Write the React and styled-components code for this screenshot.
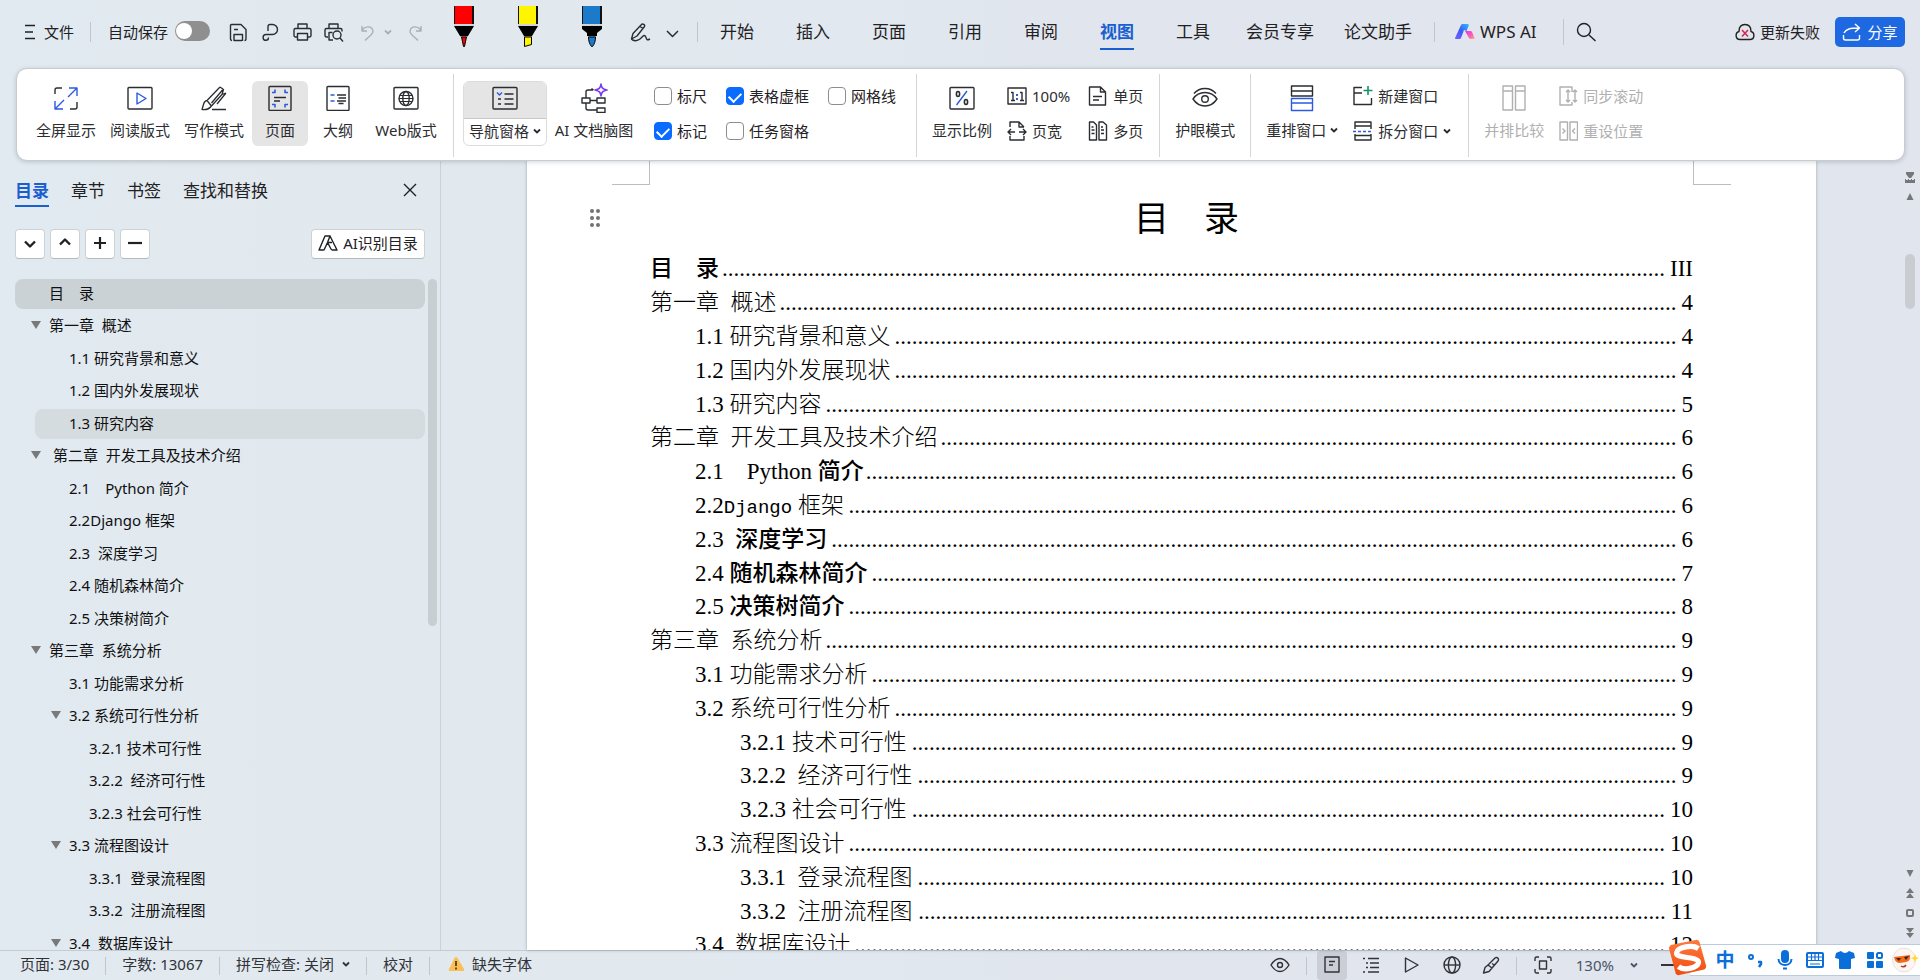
import React, { useLayoutEffect, useRef, useState } from "react";
import styled, { createGlobalStyle, css } from "styled-components";

const INK = "#2b2d30";
const BLUE = "#2a5be0";
const LINK = "#1a5fd0";

const GlobalStyle = createGlobalStyle`
  * { box-sizing: border-box; }
  body {
    margin: 0;
    color: #1f2124;
    font: 15px/20px "Noto Sans", "Noto Sans CJK SC", sans-serif;
  }
  button {
    padding: 0;
    border: 0;
    background: none;
    color: inherit;
    font: inherit;
    white-space: nowrap;
  }
  svg { display: block; flex: none; }
`;

/* ---------- Shell ---------- */

const Shell = styled.div`
  display: flex;
  flex-direction: column;
  height: 100vh;
  overflow: hidden;
  background: linear-gradient(90deg, #e2eaf1 0%, #e1e9ee 24%, #e1e8ef 42%, #e1e5ed 62%, #e1e5ed 100%);
`;

const Divider = styled.span`
  flex: none;
  width: 1px;
  height: ${(p) => p.$h || 20}px;
  background: #bfc6cc;
`;

/* ---------- Title bar ---------- */

const TitleBar = styled.header`
  display: flex;
  align-items: center;
  flex: none;
  height: 68px;
  padding: 0 15px 4px 24px;
`;

const FileButton = styled.button`
  display: flex;
  align-items: center;
  gap: 8px;
  margin-right: 16px;
`;

const AutoSave = styled.label`
  display: flex;
  align-items: center;
  gap: 7px;
  margin: 0 12px 0 17px;
  white-space: nowrap;
`;

const Toggle = styled.input`
  appearance: none;
  display: flex;
  align-items: center;
  width: 35px;
  height: 20px;
  margin: 0 0 2px;
  padding: 0 1px;
  border-radius: 10px;
  background: #8f8f8f;
  &::before {
    content: "";
    width: 16px;
    height: 16px;
    border-radius: 50%;
    background: #fff;
  }
`;

const ToolButton = styled.button`
  display: flex;
  align-items: center;
  justify-content: ${(p) => (p.$start ? "flex-start" : "center")};
  flex: none;
  width: ${(p) => p.$w || 32}px;
  height: 32px;
  color: ${(p) => (p.$dim ? "#a9b0b5" : INK)};
`;

const Pens = styled.div`
  display: flex;
  align-self: flex-start;
  padding-top: 6px;
`;

const PenButton = styled.button`
  display: flex;
  justify-content: center;
  width: 64px;
`;

const Tabs = styled.nav`
  display: flex;
  margin: 0 7px 0 1px;
`;

const Tab = styled.button`
  display: flex;
  justify-content: center;
  width: ${(p) => (p.$wide ? 98 : 76)}px;
  font-size: 17px;
  line-height: 26px;
  span {
    padding: 5px 0 3px;
    border-bottom: 2px solid transparent;
  }
  ${(p) =>
    p.$active &&
    css`
      color: ${LINK};
      font-weight: 700;
      span { border-color: ${LINK}; }
    `}
`;

const WpsAi = styled.button`
  display: flex;
  align-items: center;
  gap: 5px;
  margin: 0 26px 0 20px;
  font-size: 17px;
`;

const SearchButton = styled.button`
  margin-left: 12px;
`;

const Spacer = styled.div`
  flex: ${(p) => (p.$w ? `0 0 ${p.$w}px` : 1)};
`;

const SyncState = styled.button`
  display: flex;
  align-items: center;
  gap: 5px;
  margin-right: 15px;
`;

const ShareButton = styled.button`
  display: flex;
  align-items: center;
  justify-content: center;
  gap: 6px;
  width: 70px;
  height: 30px;
  border-radius: 5px;
  background: #1e69e2;
  color: #fff;
`;

/* ---------- Ribbon ---------- */

const Ribbon = styled.section`
  display: flex;
  flex: none;
  position: relative;
  z-index: 1;
  margin: 0 15px 0 16px;
  padding: 5px 0 3px;
  border: 1px solid #c6ccd0;
  border-radius: 11px;
  background: #fff;
  box-shadow: 0 1px 4px rgba(60, 80, 90, 0.25);
`;

const Group = styled.div`
  display: flex;
  align-items: center;
  gap: ${(p) => p.$gap || 0}px;
  height: 83px;
  padding: 0 ${(p) => p.$end || 9}px 4px ${(p) => p.$start || 9}px;
  border-right: 1px solid #d3d5d7;
  &:last-child { border-right: 0; }
`;

const BigButton = styled.button`
  display: flex;
  flex-direction: column;
  align-items: center;
  width: ${(p) => p.$w || 72}px;
  height: 65px;
  border-radius: 6px;
  background: ${(p) => (p.$active ? "#e5e5e5" : "none")};
  color: ${(p) => (p.disabled ? "#b0b0b0" : INK)};
`;

const BigIcon = styled.span`
  display: flex;
  align-items: center;
  justify-content: center;
  width: 100%;
  height: 34px;
`;

const Label = styled.span`
  display: flex;
  align-items: center;
  gap: 4px;
  height: 30px;
`;

const SplitButton = styled(BigButton)`
  border: 1px solid #dcdcdc;
  overflow: hidden;
  ${BigIcon} {
    height: 37px;
    padding-bottom: 4px;
    border-bottom: 1px solid #c8c8c8;
    background: #e5e5e5;
  }
  ${Label} { height: 23px; }
`;

const CheckGrid = styled.div`
  display: grid;
  grid-template: 35px 35px / 72px 102px auto;
  margin-left: 13px;
`;

const CheckLabel = styled.label`
  display: flex;
  align-items: center;
  gap: 5px;
  white-space: nowrap;
`;

const Checkbox = styled.input`
  appearance: none;
  display: flex;
  justify-content: center;
  width: 18px;
  height: 18px;
  margin: 0;
  border: 1px solid #8d8d8d;
  border-radius: 4px;
  background: #fff;
  &:checked {
    border-color: #0a6cff;
    background: #0a6cff;
  }
  &:checked::before {
    content: "";
    width: 6px;
    height: 10px;
    margin-top: 2px;
    border: solid #fff;
    border-width: 0 2px 2px 0;
    transform: rotate(45deg);
  }
`;

const SmallGrid = styled.div`
  display: grid;
  grid-template-rows: 35px 35px;
  grid-auto-flow: column;
  column-gap: ${(p) => p.$gap || 0}px;
`;

const SmallButton = styled.button`
  display: flex;
  align-items: center;
  gap: 5px;
  color: ${(p) => (p.disabled ? "#b0b0b0" : INK)};
`;

/* ---------- Sidebar ---------- */

const Body = styled.div`
  display: flex;
  flex: 1;
  min-height: 0;
`;

const Sidebar = styled.aside`
  display: flex;
  flex-direction: column;
  flex: none;
  width: 441px;
  padding: 14px 3px 0 15px;
  border-right: 1px solid #cdd1d3;
`;

const SideTabs = styled.div`
  display: flex;
  align-items: flex-start;
  gap: 22px;
  padding-right: 20px;
`;

const SideTab = styled.button`
  height: 32px;
  padding-top: 1px;
  font-size: 17px;
  line-height: 28px;
  border-bottom: 2px solid transparent;
  ${(p) =>
    p.$active &&
    css`
      color: ${LINK};
      border-color: ${LINK};
      font-weight: 700;
    `}
`;

const CloseButton = styled.button`
  margin: 8px 0 0 auto;
`;

const SideTools = styled.div`
  display: flex;
  gap: 5px;
  margin: 22px 12px 20px 0;
`;

const SideTool = styled.button`
  display: flex;
  align-items: center;
  justify-content: center;
  gap: 5px;
  width: ${(p) => (p.$wide ? 114 : 30)}px;
  height: 30px;
  margin-left: ${(p) => (p.$wide ? "auto" : 0)};
  padding-bottom: 2px;
  border: 1px solid #cdd2d5;
  border-bottom-color: #b4babd;
  border-radius: 4px;
  background: #fff;
`;

const TreeArea = styled.div`
  display: flex;
  gap: 3px;
  flex: 1;
  min-height: 0;
  overflow: hidden;
`;

const Tree = styled.ul`
  flex: 1;
  margin: 0;
  padding: 0;
  list-style: none;
`;

const TreeRow = styled.li`
  display: flex;
  align-items: center;
  height: 30px;
  margin: 0 0 2px ${(p) => p.$level * 20}px;
  padding: 0 0 2px 14px;
  border-radius: 8px;
  background: ${(p) => p.$bg || "none"};
  color: #111;
  white-space: pre;
  &:nth-child(even) { margin-bottom: 3px; }
`;

const Twisty = styled.span`
  display: flex;
  align-items: center;
  width: 20px;
  padding-left: 2px;
`;

const SideThumb = styled.div`
  width: 9px;
  height: 347px;
  border-radius: 5px;
  background: #c8ced2;
`;

/* ---------- Document ---------- */

const Page = styled.main`
  position: relative;
  flex: 1;
  min-width: 0;
  margin: 0 84px 0 86px;
  padding: 0 123px;
  overflow: hidden;
  background: #fff;
  box-shadow: 0 0 3px rgba(70, 90, 100, 0.45);
  color: #000;
  font-family: "Liberation Serif", "Noto Sans CJK SC", serif;
`;

const CropMark = styled.span`
  position: absolute;
  top: 0;
  width: 38px;
  height: 24px;
  border: solid #bdbdbd;
  ${(p) =>
    p.$right
      ? css`
          right: 85px;
          border-width: 0 0 1px 1px;
        `
      : css`
          left: 85px;
          border-width: 0 1px 1px 0;
        `}
`;

const DragHandle = styled.button`
  position: absolute;
  top: 48px;
  left: 62px;
  color: #737373;
`;

const Title = styled.h1`
  margin: 0;
  padding: 35px 0 8px 30px;
  font-size: 35px;
  font-weight: 400;
  line-height: 48px;
  text-align: center;
`;

const TocList = styled.ol`
  margin: 0;
  padding: 0;
  list-style: none;
  font-size: 23px;
`;

const TocLine = styled.li`
  display: flex;
  align-items: baseline;
  height: 34px;
  padding-left: ${(p) => p.$level * 45}px;
  line-height: 34px;
  white-space: pre;
  &:nth-child(5n) { height: 33px; }
`;

const Song = styled.span`
  font-weight: 300;
`;

const Hei = styled.span`
  font-weight: 500;
`;

const Mono = styled.span`
  font-family: "Liberation Mono", monospace;
  font-size: 19px;
`;

const LeaderBox = styled.span`
  flex: 1;
  min-width: 0;
  margin: 0 5px 0 2px;
  text-align: right;
`;

const ScrollRail = styled.div`
  display: flex;
  flex-direction: column;
  align-items: center;
  flex: none;
  width: 20px;
  padding: 10px 0 7px;
  color: #757779;
`;

const RailThumb = styled.div`
  width: 10px;
  height: 55px;
  margin: 45px 0 auto;
  border-radius: 5px;
  background: #c9ccd1;
`;

const RailButton = styled.button`
  display: flex;
  align-items: center;
  justify-content: center;
  width: 20px;
  height: ${(p) => p.$h || 20}px;
`;

/* ---------- Status bar ---------- */

const StatusBar = styled.footer`
  display: flex;
  align-items: center;
  flex: none;
  height: 30px;
  padding: 0 210px 0 20px;
  border-top: 1px solid #c5ccd1;
  color: #303338;
`;

const StatusItem = styled.button`
  display: flex;
  align-items: center;
  gap: 8px;
  height: 22px;
  margin-right: 16px;
  padding-bottom: 3px;
  & + span { margin-right: 16px; }
`;

const ViewButton = styled.button`
  display: flex;
  align-items: center;
  justify-content: center;
  width: ${(p) => p.$w || 41}px;
  height: 29px;
  padding-bottom: 2px;
  border-radius: 4px;
  background: ${(p) => (p.$active ? "#cbced6" : "none")};
`;

const ZoomLevel = styled.button`
  display: flex;
  align-items: center;
  gap: 16px;
  height: 22px;
  margin: 0 23px 0 12px;
  padding-bottom: 2px;
  color: #4a5468;
`;

const ImeBar = styled.div`
  position: fixed;
  right: 0;
  bottom: 4px;
  z-index: 2;
  display: flex;
  align-items: center;
  width: 230px;
  height: 32px;
  padding-left: 20px;
  border: solid #bccbdc;
  border-width: 1px 0 1px 0;
  background: #fff;
  color: #0a6fd8;
`;

const ImeLogo = styled.span`
  position: absolute;
  left: -22px;
  top: -6px;
`;

const ImeButton = styled.button`
  display: flex;
  align-items: center;
  justify-content: center;
  width: 30px;
  height: 30px;
  font-size: 19px;
  font-weight: 700;
`;

/* ---------- Icons ---------- */

const Icon = ({ w = 20, h = w, sw = 1.4, children }) => (
  <svg
    width={w}
    height={h}
    viewBox={`0 0 ${w} ${h}`}
    fill="none"
    stroke="currentColor"
    strokeWidth={sw}
    strokeLinejoin="round"
    aria-hidden="true"
  >
    {children}
  </svg>
);

const Chevron = ({ up = false, w = 8, sw = 1.8 }) => {
  const mid = w / 2;
  return (
    <Icon w={w} h={w} sw={sw}>
      <path d={up ? `M1 ${mid + 1.5}L${mid} 2.5L${w - 1} ${mid + 1.5}` : `M1 ${mid - 1.5}L${mid} ${w - 2.5}L${w - 1} ${mid - 1.5}`} />
    </Icon>
  );
};

const Pen = ({ color, tip, shoulder }) => (
  <Icon w={20} h={42} sw={1}>
    <path d="M0 0h20v18H0z" fill="#111" stroke="none" />
    <path d="M1 0h17v18H1z" fill={color} stroke="none" />
    <path d="M0 19h20" stroke="#b9c2c6" />
    <path d={shoulder} fill="#000" stroke="none" />
    <path d="M6 30.5h8" stroke="#9aa0a3" />
    <path d={tip} fill={color} stroke="#000" />
  </Icon>
);

const PENS = [
  { name: "红色笔", color: "#fe0000", shoulder: "M0 20h20l-6 10H6z", tip: "M7.5 31h5l-2 9.500h-1z" },
  { name: "黄色荧光笔", color: "#fff500", shoulder: "M0 20h20l-6 10H6z", tip: "M6.5 31h7v7.500l-7 2z" },
  { name: "蓝色笔", color: "#1c7acb", shoulder: "M0 20h20v3l-5 4v3H5v-3l-5-4z", tip: "M6.5 31h7c0 4-1 7-3 9.500h-1c-2-2.500-3-5.500-3-9.500z" },
];

const Globe = ({ w = 18 }) => {
  const c = w / 2;
  const r = c - 1;
  return (
    <Icon w={w}>
      <circle cx={c} cy={c} r={r} />
      <ellipse cx={c} cy={c} rx={r * 0.45} ry={r} />
      <path d={`M1 ${c}H${w - 1}`} />
    </Icon>
  );
};

const FullscreenIcon = () => (
  <Icon w={26}>
    <path d="M2 9V5a2 2 0 0 1 2-2h5M24 17v5a2 2 0 0 1-2 2h-5" />
    <path stroke={BLUE} d="M16 3h8v8M24 3l-9 9M2 16v8h8M2 24l9-9" />
  </Icon>
);
const ReadingIcon = () => (
  <Icon w={26}>
    <rect x="1" y="2.5" width="24" height="21.5" rx="1" />
    <path stroke={BLUE} d="M10 8v11l9-5.500z" />
  </Icon>
);
const WritingIcon = () => (
  <Icon w={26} sw={1.3}>
    <path d="M19 2l3.500 2.500-1.500 5L9.500 22M19 2L6 15.500M21.500 5L10.500 18M6 15.500c-4 .5-3 4-5 9 5 .5 7-.5 8.500-2.500M6 15.500l4 5M25 8l-9 11M21 9.500L25 8M11 24.500h14" />
  </Icon>
);
const PageIcon = () => (
  <Icon w={26}>
    <rect x="2" y="1.5" width="22" height="24" rx="1" />
    <path d="M7 12.500h12M7 16h6" />
    <path stroke={BLUE} strokeWidth="1.6" d="M5 7.500h3V4.500M21 7.500h-3V4.500M5 19.500h3v3M21 19.500h-3v3" />
  </Icon>
);
const OutlineIcon = () => (
  <Icon w={26}>
    <rect x="2" y="1.5" width="22" height="24" rx="1" />
    <path d="M12 10h9M13.500 13h7.500M12 16h9M13.500 18.500h5" />
    <path stroke={BLUE} strokeWidth="1.6" d="M5.500 10h4M5.500 16h4" />
  </Icon>
);
const WebIcon = () => (
  <Icon w={26}>
    <rect x="1" y="2.5" width="24" height="21.5" rx="1" />
    <circle cx="13" cy="13.5" r="7" />
    <ellipse cx="13" cy="13.5" rx="3.2" ry="7" />
    <path d="M6 13.500h14M7 10.500h12M7 16.500h12" strokeWidth="1.1" />
  </Icon>
);
const NavPaneIcon = () => (
  <Icon w={26}>
    <rect x="1" y="2.5" width="24" height="21.5" rx="1" />
    <path stroke={BLUE} d="M5 7.500l2.500 2.500 2.500-2.500" />
    <path d="M12.500 9h9M12.500 14h9M12.500 19h9M6 14h3M6 19h3" />
  </Icon>
);
const MindMapIcon = () => (
  <Icon w={28} h={30}>
    <path d="M2 15h8v5H2zM17 15h8v5h-8zM17 25h8v4.500h-8zM10 17.500h7M6 15V9a2 2 0 0 1 2-2h5M11.500 5.500L13.500 7M6 20v5a2 2 0 0 0 2 2h9" />
    <path stroke="#7a3cf0" strokeWidth="1.6" d="M21 1c.6 4 1.500 5 6 6-4.500 1-5.400 2-6 6-.6-4-1.500-5-6-6 4.500-1 5.400-2 6-6z" />
  </Icon>
);
const RatioIcon = () => (
  <Icon w={26}>
    <rect x="1" y="2.5" width="24" height="21.5" rx="1" />
    <path stroke={BLUE} d="M18 6L7.500 20" />
    <ellipse cx="9" cy="9" rx="1.6" ry="2.5" strokeWidth="1.6" />
    <ellipse cx="17" cy="17" rx="1.6" ry="2.5" strokeWidth="1.6" />
  </Icon>
);
const EyeCareIcon = () => (
  <Icon w={26}>
    <path d="M1 14c3-4.500 7-6.500 12-6.500S22 9.500 25 14c-3 4.500-7 7-12 7S4 18.500 1 14zM2 8.500C5 5 9 3.500 13 3.500S21 5 24 8.500" />
    <circle cx="13" cy="14" r="3.3" />
  </Icon>
);
const ArrangeIcon = () => (
  <Icon w={26} h={28}>
    <path d="M2.500 2h21v10h-21zM2.500 7h21" />
    <path stroke={BLUE} d="M2.500 14.500h21v12h-21zM2.500 19h21" />
  </Icon>
);
const CompareIcon = () => (
  <Icon w={26} h={28}>
    <path d="M2 2h9.500v24H2zM14.500 2H24v24h-9.500zM2 7h9.500M14.500 7H24" />
  </Icon>
);
const OneToOneIcon = () => (
  <Icon w={20} h={18}>
    <rect x="1" y="1" width="18" height="16" />
    <path d="M4 5.500h2v8M4 13.500h4M13 5.500h2v8M13 13.500h4" />
    <path stroke={BLUE} strokeWidth="2" d="M10 7v2M10 11v2" />
  </Icon>
);
const PageWidthIcon = () => (
  <Icon w={20}>
    <path d="M3 6V1h9l5 5M12 1v5h5M3 15v4h14v-4M8 11H1M4 8l-3 3 3 3M12 11h7M16 8l3 3-3 3" />
  </Icon>
);
const SinglePageIcon = () => (
  <Icon w={20}>
    <path d="M1.500 1h11l5 5v13h-16zM12.500 1v5h5M5 10.500h9M5 14h6" />
  </Icon>
);
const MultiPageIcon = () => (
  <Icon w={20}>
    <path d="M1.500 1h4l3 3v15h-7zM11 1h4l3.500 3v15H11zM3.500 9h3M3.500 12.500h3M13 9h3M13 12.500h3M3.500 6h2M13 6h2" />
  </Icon>
);
const NewWindowIcon = () => (
  <Icon w={20}>
    <path d="M9 1.500H1v17h17.500V12M1 7h8" />
    <path stroke="#12936a" strokeWidth="1.6" d="M15 0v9M10.500 4.500h9" />
  </Icon>
);
const SplitWindowIcon = () => (
  <Icon w={20}>
    <path d="M2 8V1h16v7M2 5h16M2 13v6h16v-6M2 14.500h16" />
    <path stroke={BLUE} strokeDasharray="3 2" d="M0 10.500h20" />
  </Icon>
);
const SyncScrollIcon = () => (
  <Icon w={19} h={20}>
    <path d="M13 6V1H1v18h12v-3M9 4v12M7 6l2-2 2 2M7 14l2 2 2-2M16 4v12M14 6l2-2 2 2M14 14l2 2 2-2" />
  </Icon>
);
const ResetIcon = () => (
  <Icon w={19} h={20}>
    <path d="M1 1h7.500v18H1zM11 1h7.500v18H11zM3.500 7.500L6 10l-2.500 2.500M16 7.500L13.500 10l2.500 2.500" />
  </Icon>
);
const AiLogo = () => (
  <svg width="20" height="16" viewBox="0 0 20 16" aria-hidden="true">
    <defs>
      <linearGradient id="aiLeft" x1="0" y1="1" x2="1" y2="0">
        <stop offset="0" stopColor="#7a5cff" />
        <stop offset=".5" stopColor="#3b5cf5" />
        <stop offset="1" stopColor="#2fc2ff" />
      </linearGradient>
      <linearGradient id="aiRight" x1="0" y1="0" x2="1" y2="1">
        <stop offset="0" stopColor="#d43cf0" />
        <stop offset=".6" stopColor="#ff5fae" />
        <stop offset="1" stopColor="#ffb08a" />
      </linearGradient>
    </defs>
    <path d="M6 1q.5-1 1.500-1H13l1 1-2.500 6L9 6 6 14q-.5 1-1.500 1H.5q-.7-.5-.3-1.200z" fill="url(#aiLeft)" />
    <path d="M10 7h5.500q1 0 1.500 1l2.600 6q.2 1-.8 1h-3.300q-1 0-1.500-1z" fill="url(#aiRight)" />
  </svg>
);

/* ---------- Data ---------- */

const BIG_VIEWS = [
  { label: "全屏显示", icon: <FullscreenIcon />, w: 72 },
  { label: "阅读版式", icon: <ReadingIcon />, w: 72 },
  { label: "写作模式", icon: <WritingIcon />, w: 72 },
  { label: "页面", icon: <PageIcon />, w: 56, active: true },
  { label: "大纲", icon: <OutlineIcon />, w: 56 },
  { label: "Web版式", icon: <WebIcon />, w: 76 },
];

const CHECKS = [
  ["标尺", false],
  ["表格虚框", true],
  ["网格线", false],
  ["标记", true],
  ["任务窗格", false],
];

const TABS = ["开始", "插入", "页面", "引用", "审阅", "视图", "工具", "会员专享", "论文助手"];

const OUTLINE = [
  [0, "目\u3000录", { bg: "#cad2d5" }],
  [0, "第一章  概述", { open: true }],
  [1, "1.1 研究背景和意义"],
  [1, "1.2 国内外发展现状"],
  [1, "1.3 研究内容", { bg: "#d5dcdf" }],
  [0, " 第二章  开发工具及技术介绍", { open: true }],
  [1, "2.1\u3000Python 简介"],
  [1, "2.2Django 框架"],
  [1, "2.3  深度学习"],
  [1, "2.4 随机森林简介"],
  [1, "2.5 决策树简介"],
  [0, "第三章  系统分析", { open: true }],
  [1, "3.1 功能需求分析"],
  [1, "3.2 系统可行性分析", { open: true }],
  [2, "3.2.1 技术可行性"],
  [2, "3.2.2  经济可行性"],
  [2, "3.2.3 社会可行性"],
  [1, "3.3 流程图设计", { open: true }],
  [2, "3.3.1  登录流程图"],
  [2, "3.3.2  注册流程图"],
  [1, "3.4  数据库设计", { open: true }],
];

const TOC = [
  [0, <Hei>目{"\u3000"}录</Hei>, "III"],
  [0, <Song>第一章{"  "}概述</Song>, "4"],
  [1, <Song>1.1 研究背景和意义</Song>, "4"],
  [1, <Song>1.2 国内外发展现状</Song>, "4"],
  [1, <Song>1.3 研究内容</Song>, "5"],
  [0, <Song>第二章{"  "}开发工具及技术介绍</Song>, "6"],
  [1, <Hei>2.1{"\u3000"}Python 简介</Hei>, "6"],
  [1, <Song>2.2<Mono>Django</Mono> 框架</Song>, "6"],
  [1, <Hei>2.3{"  "}深度学习</Hei>, "6"],
  [1, <Hei>2.4 随机森林简介</Hei>, "7"],
  [1, <Hei>2.5 决策树简介</Hei>, "8"],
  [0, <Song>第三章{"  "}系统分析</Song>, "9"],
  [1, <Song>3.1 功能需求分析</Song>, "9"],
  [1, <Song>3.2 系统可行性分析</Song>, "9"],
  [2, <Song>3.2.1 技术可行性</Song>, "9"],
  [2, <Song>3.2.2{"  "}经济可行性</Song>, "9"],
  [2, <Song>3.2.3 社会可行性</Song>, "10"],
  [1, <Song>3.3 流程图设计</Song>, "10"],
  [2, <Song>3.3.1{"  "}登录流程图</Song>, "10"],
  [2, <Song>3.3.2{"  "}注册流程图</Song>, "11"],
  [1, <Song>3.4{"  "}数据库设计</Song>, "12"],
];

/* Width of one "." in the body face: a quarter of the 23px em. */
const DOT_WIDTH = 23 / 4;

/* Fills the room between an entry and its page number with whole dots. */
const Leader = () => {
  const box = useRef(null);
  const [count, setCount] = useState(0);
  useLayoutEffect(() => {
    const fit = () => setCount(Math.floor(box.current.getBoundingClientRect().width / DOT_WIDTH));
    fit();
    window.addEventListener("resize", fit);
    return () => window.removeEventListener("resize", fit);
  }, []);
  return (
    <LeaderBox ref={box} aria-hidden="true">
      {".".repeat(count)}
    </LeaderBox>
  );
};

/* ---------- Sections ---------- */

const Header = () => (
  <TitleBar>
    <FileButton>
      <Icon w={12} h={16}>
        <path d="M1 1.500h10M1 8h8M1 14.500h10" />
      </Icon>
      文件
    </FileButton>
    <Divider />
    <AutoSave>
      自动保存
      <Toggle type="checkbox" role="switch" />
    </AutoSave>
    <ToolButton aria-label="保存">
      <Icon w={18} h={19}>
        <path d="M3 17.500a1.500 1.500 0 0 1-1.500-1.500V2.500a1 1 0 0 1 1-1H12l5 5V16a1.500 1.500 0 0 1-1.500 1.500M5 18v-6.500h8.500V18M5 6.500h4M5 17.500h8" />
      </Icon>
    </ToolButton>
    <ToolButton aria-label="输出为PDF">
      <Icon w={17} h={19}>
        <path d="M6 8V3.500a2 2 0 0 1 2-2h2.500a5 5 0 0 1 0 10H4a2.800 2.800 0 0 0 0 5.800c2 0 2.500-1 2.500-2.800" />
      </Icon>
    </ToolButton>
    <ToolButton aria-label="打印">
      <Icon w={19} h={18}>
        <path d="M5 5.500V1h9v4.500M4 14H2.500a1.500 1.500 0 0 1-1.500-1.500V7a1.500 1.500 0 0 1 1.500-1.500h14A1.500 1.500 0 0 1 18 7v5.500a1.500 1.500 0 0 1-1.500 1.500H15M4.500 10.500h10v6.500h-10z" />
      </Icon>
    </ToolButton>
    <ToolButton aria-label="打印预览">
      <Icon w={20} h={19}>
        <path d="M5 5.500V1h9v4.500M4 14H2.500A1.500 1.500 0 0 1 1 12.500V7a1.500 1.500 0 0 1 1.500-1.500h14A1.500 1.500 0 0 1 18 7v1.500M8.500 9.500H5v7.500h4" />
        <circle cx="13" cy="12" r="4" />
        <path d="M16 15l3 3.500" />
      </Icon>
    </ToolButton>
    <ToolButton $dim $w={34} aria-label="撤销">
      <Icon w={14} h={17}>
        <path d="M2 2v5h5M2 7c2-5 10-6 11 0 0 4-4 5-8 9.500" />
      </Icon>
    </ToolButton>
    <ToolButton $w={16} $start $dim aria-label="撤销选项">
      <Chevron />
    </ToolButton>
    <ToolButton $dim aria-label="恢复">
      <Icon w={14} h={17}>
        <path d="M12 2v5H7M12 7C10 2 2 1 1 7c0 4 4 5 8 9.500" />
      </Icon>
    </ToolButton>
    <Pens>
      {PENS.map(({ name, ...pen }) => (
        <PenButton key={name} aria-label={name}>
          <Pen {...pen} />
        </PenButton>
      ))}
    </Pens>
    <ToolButton aria-label="墨迹">
      <Icon w={22} h={20}>
        <path d="M12.500 2.500c1-1.500 4 .5 3 2L8 14l-5.500 3L4 11.500zM11 4.500l3 2M2.500 17c2 2.500 6 2 8.500 0s4-5 5.500-2.500.5 4.500 4.500 2.500" />
      </Icon>
    </ToolButton>
    <ToolButton aria-label="更多墨迹">
      <Chevron w={13} sw={1.5} />
    </ToolButton>
    <Spacer $w={9} />
    <Divider />
    <Tabs>
      {TABS.map((t) => (
        <Tab key={t} $wide={t.length > 2} $active={t === "视图"}>
          <span>{t}</span>
        </Tab>
      ))}
    </Tabs>
    <Divider />
    <WpsAi>
      <AiLogo />
      WPS AI
    </WpsAi>
    <Divider $h={26} />
    <SearchButton aria-label="搜索">
      <Icon w={20}>
        <circle cx="8" cy="8" r="6.5" />
        <path d="M13 13l6.500 6" />
      </Icon>
    </SearchButton>
    <Spacer />
    <SyncState>
      <Icon w={20} h={18}>
        <path d="M5 16.500c-5 0-5-7-1-8C4 3.500 7 1.500 10 1.500s6 2 6 7c4 1 4 8-1 8z" />
        <path stroke="#d92653" strokeWidth="1.6" d="M7 7l6 6.500M13 7l-6 6.500" />
      </Icon>
      更新失败
    </SyncState>
    <ShareButton>
      <Icon w={19} h={18}>
        <path d="M1.500 12v3a2 2 0 0 0 2 2h12a2 2 0 0 0 2-2v-3M2 10C4 6 8 5 17 5M13 1l4.500 4L13 9" />
      </Icon>
      分享
    </ShareButton>
  </TitleBar>
);

const Big = ({ icon, label, w, active, arrow, disabled }) => (
  <BigButton $w={w} $active={active} disabled={disabled}>
    <BigIcon>{icon}</BigIcon>
    <Label>
      {label}
      {arrow && <Chevron />}
    </Label>
  </BigButton>
);

const ViewRibbon = () => (
  <Ribbon>
    <Group $gap={2} $start={13}>
      {BIG_VIEWS.map((v) => (
        <Big key={v.label} {...v} />
      ))}
    </Group>
    <Group $gap={2} $end={20}>
      <SplitButton $w={84}>
        <BigIcon>
          <NavPaneIcon />
        </BigIcon>
        <Label>
          导航窗格
          <Chevron />
        </Label>
      </SplitButton>
      <Big w={90} icon={<MindMapIcon />} label="AI 文档脑图" />
      <CheckGrid>
        {CHECKS.map(([label, on]) => (
          <CheckLabel key={label}>
            <Checkbox type="checkbox" defaultChecked={on} />
            {label}
          </CheckLabel>
        ))}
      </CheckGrid>
    </Group>
    <Group $gap={9} $end={16}>
      <Big icon={<RatioIcon />} label="显示比例" />
      <SmallGrid $gap={18}>
        <SmallButton><OneToOneIcon />100%</SmallButton>
        <SmallButton><PageWidthIcon />页宽</SmallButton>
        <SmallButton><SinglePageIcon />单页</SmallButton>
        <SmallButton><MultiPageIcon />多页</SmallButton>
      </SmallGrid>
    </Group>
    <Group>
      <Big icon={<EyeCareIcon />} label="护眼模式" />
    </Group>
    <Group $gap={9} $end={17}>
      <Big w={84} icon={<ArrangeIcon />} label="重排窗口" arrow />
      <SmallGrid>
        <SmallButton><NewWindowIcon />新建窗口</SmallButton>
        <SmallButton><SplitWindowIcon />拆分窗口<Chevron /></SmallButton>
      </SmallGrid>
    </Group>
    <Group $gap={9}>
      <Big icon={<CompareIcon />} label="并排比较" disabled />
      <SmallGrid>
        <SmallButton disabled><SyncScrollIcon />同步滚动</SmallButton>
        <SmallButton disabled><ResetIcon />重设位置</SmallButton>
      </SmallGrid>
    </Group>
  </Ribbon>
);

const NavPane = () => (
  <Sidebar>
    <SideTabs>
      {["目录", "章节", "书签", "查找和替换"].map((t, i) => (
        <SideTab key={t} $active={i === 0}>
          {t}
        </SideTab>
      ))}
      <CloseButton aria-label="关闭">
        <Icon w={14}>
          <path d="M1 1l12 12M13 1L1 13" />
        </Icon>
      </CloseButton>
    </SideTabs>
    <SideTools>
      <SideTool aria-label="展开"><Chevron w={12} sw={2.4} /></SideTool>
      <SideTool aria-label="收起"><Chevron w={12} sw={2.4} up /></SideTool>
      <SideTool aria-label="增加">
        <Icon w={14} sw={2.2}><path d="M7 1v12M1 7h12" /></Icon>
      </SideTool>
      <SideTool aria-label="减少">
        <Icon w={16} sw={2.2}><path d="M1 8h14" /></Icon>
      </SideTool>
      <SideTool $wide>
        <Icon w={20} h={16}>
          <path d="M7 1h5l-2.500 6.500L6.500 14q-.3 1-1.500 1H1zM12 1l7 14h-4.500q-1 0-1.500-1L9.500 7.500l4.500 0" />
        </Icon>
        AI识别目录
      </SideTool>
    </SideTools>
    <TreeArea>
      <Tree>
        {OUTLINE.map(([level, text, opt = {}]) => (
          <TreeRow key={text} $level={level} $bg={opt.bg}>
            <Twisty>
              {opt.open && (
                <svg width="10" height="8" viewBox="0 0 10 8" aria-hidden="true">
                  <path d="M0 0h10L5 8z" fill="#77797b" />
                </svg>
              )}
            </Twisty>
            {text}
          </TreeRow>
        ))}
      </Tree>
      <SideThumb />
    </TreeArea>
  </Sidebar>
);

const DocumentPage = () => (
  <Page>
    <CropMark />
    <CropMark $right />
    <DragHandle aria-label="拖动目录">
      <svg width="12" height="19" viewBox="0 0 12 19" fill="currentColor" aria-hidden="true">
        {[2, 9, 16].map((y) => (
          <g key={y}>
            <circle cx="3" cy={y} r="2" />
            <circle cx="9" cy={y} r="2" />
          </g>
        ))}
      </svg>
    </DragHandle>
    <Title>目{"\u3000"}录</Title>
    <TocList>
      {TOC.map(([level, text, page], i) => (
        <TocLine key={i} $level={level}>
          {text}
          <Leader />
          {page}
        </TocLine>
      ))}
    </TocList>
  </Page>
);

const Triangle = ({ d, h = 10 }) => (
  <svg width="10" height={h} viewBox={`0 0 10 ${h}`} fill="currentColor" aria-hidden="true">
    <path d={d} />
  </svg>
);

const PageRail = () => (
  <ScrollRail>
    <RailButton $h={12} aria-label="标尺开关">
      <Triangle h={11} d="M1 0h8v2L6 6H4L1 2zM0 7h1v1h2V7h1v1h2V7h1v1h2V7h1v4H0z" />
    </RailButton>
    <RailButton $h={26} aria-label="向上滚动">
      <Triangle h={7} d="M5 0l3.500 7h-7z" />
    </RailButton>
    <RailThumb />
    <RailButton aria-label="向下滚动">
      <Triangle h={7} d="M1.500 0h7L5 7z" />
    </RailButton>
    <RailButton aria-label="上一页">
      <Triangle d="M5 0l4 5H1zM5 5l4 5H1z" />
    </RailButton>
    <RailButton aria-label="选择浏览对象">
      <Icon w={8} sw={2}><rect x="1" y="1" width="6" height="6" rx="1" /></Icon>
    </RailButton>
    <RailButton aria-label="下一页">
      <Triangle d="M1 0h8L5 5zM1 5h8L5 10z" />
    </RailButton>
  </ScrollRail>
);

const Status = () => (
  <StatusBar>
    <StatusItem>页面: 3/30</StatusItem>
    <Divider $h={18} />
    <StatusItem>字数: 13067</StatusItem>
    <Divider $h={18} />
    <StatusItem>拼写检查: 关闭<Chevron /></StatusItem>
    <Divider $h={18} />
    <StatusItem>校对</StatusItem>
    <Divider $h={18} />
    <StatusItem>
      <svg width="18" height="14" viewBox="0 0 18 14" aria-hidden="true">
        <path d="M10 0q1 0 1.500 1L18 12q.5 2-1 2H4q-2 0-1-2L8.500 1Q9 0 10 0z" fill="#fbbf57" />
        <path d="M10 4v5M10 10.500v2" stroke="#6b4a12" strokeWidth="2" />
      </svg>
      缺失字体
    </StatusItem>
    <Spacer />
    <ViewButton $w={32} aria-label="护眼模式">
      <Icon w={20} h={16}>
        <path d="M1 8c2.500-4 5-6.500 9-6.500S16.500 4 19 8c-2.500 4-5 6.500-9 6.500S3.500 12 1 8z" />
        <circle cx="10" cy="8" r="2.5" />
      </Icon>
    </ViewButton>
    <Spacer $w={10} />
    <Divider $h={18} />
    <Spacer $w={10} />
    <ViewButton $w={30} $active aria-label="页面视图">
      <Icon w={16} h={17}><path d="M1 1h14v15H1zM5 5.500h6M5 9h4" /></Icon>
    </ViewButton>
    <Spacer $w={4} />
    <ViewButton aria-label="大纲视图">
      <Icon w={18} h={16}>
        <path d="M6 1.500h11M8 6h9M8 10.500h9M6 15h11M1 1.500h2M4 6h2M4 10.500h2M1 15h2" />
      </Icon>
    </ViewButton>
    <ViewButton aria-label="阅读版式">
      <Icon w={16}><path d="M1.500 1v14L14 8z" /></Icon>
    </ViewButton>
    <ViewButton $w={38} aria-label="Web版式"><Globe /></ViewButton>
    <ViewButton aria-label="写作模式">
      <Icon w={18}>
        <path d="M13 2c2-1.500 4.500.5 3 3l-6 7-4-3zM6 9l-3 2.500L1.500 17l5.500-1.500L10 12M10 7.500l3 2" />
      </Icon>
    </ViewButton>
    <Spacer $w={4} />
    <Divider $h={18} />
    <Spacer $w={6} />
    <ViewButton aria-label="适应窗口">
      <Icon w={18}>
        <path d="M1 5V2.500A1.500 1.500 0 0 1 2.500 1H5M13 1h2.500A1.500 1.500 0 0 1 17 2.500V5M17 13v2.500a1.500 1.500 0 0 1-1.500 1.500H13M5 17H2.500A1.500 1.500 0 0 1 1 15.500V13M5.500 5h7v8h-7z" />
      </Icon>
    </ViewButton>
    <ZoomLevel>130%<Chevron /></ZoomLevel>
    <ViewButton $w={49} aria-label="缩小">
      <Icon w={49} h={2} sw={2}><path d="M0 1h49" /></Icon>
    </ViewButton>
  </StatusBar>
);

const InputMethodBar = () => (
  <ImeBar>
    <ImeLogo>
      <svg width="40" height="38" viewBox="0 0 42 40" aria-hidden="true">
        <defs>
          <linearGradient id="imeOrange" x1="0" y1="0" x2="0" y2="1">
            <stop offset="0" stopColor="#ff7a3d" />
            <stop offset="1" stopColor="#f04d0e" />
          </linearGradient>
        </defs>
        <path d="M4 6L29 1q3-.5 4 2l7 25q.5 3-2 4L12 38q-3 .5-4-2L1 10q0-3 3-4z" fill="url(#imeOrange)" />
        <path
          d="M32 10C26 6 10 8 9 14.500S31 18 32 24 17 34 11 29"
          fill="none"
          stroke="#fff"
          strokeWidth="5.5"
        />
      </svg>
    </ImeLogo>
    <ImeButton>中</ImeButton>
    <ImeButton aria-label="中文标点">
      <Icon w={16} h={16} sw={2}>
        <circle cx="4" cy="5" r="2" />
        <path d="M11 10h3v2l-2 3" strokeWidth="2.5" />
      </Icon>
    </ImeButton>
    <ImeButton aria-label="语音">
      <Icon w={16} h={20} sw={2}>
        <rect x="5" y="1" width="6" height="11" rx="3" fill="currentColor" />
        <path d="M1.500 9c0 8 13 8 13 0M6 18.500h4" />
      </Icon>
    </ImeButton>
    <ImeButton aria-label="软键盘">
      <Icon w={18} h={16} sw={2}>
        <rect x="1" y="1" width="16" height="14" rx="1" />
        <path strokeWidth="1.2" d="M2 5h14M2 8.500h14M5.500 1v8M9 1v8M12.500 1v8M4 12h10" />
      </Icon>
    </ImeButton>
    <ImeButton aria-label="皮肤">
      <svg width="20" height="18" viewBox="0 0 20 18" fill="currentColor" aria-hidden="true">
        <path d="M6 0q4 4 8 0l5 2 1 5-4 1v9q0 1-1 1H5q-1 0-1-1V8L0 7l1-5z" />
      </svg>
    </ImeButton>
    <ImeButton aria-label="工具箱">
      <Icon w={18} sw={2}>
        <path d="M2 2h5v5H2zM2 11h5v5H2zM11 11h5v5h-5z" fill="currentColor" />
        <rect x="11" y="2" width="5" height="5" rx="1.5" />
      </Icon>
    </ImeButton>
    <ImeButton aria-label="助手">
      <svg width="28" height="26" viewBox="0 0 28 26" aria-hidden="true">
        <ellipse cx="13" cy="13" rx="11.5" ry="12" fill="#fdf5f2" stroke="#eedfdd" />
        <path d="M3 10l16-2q1 6-4 7l-6 1q-5 0-6-6z" fill="#f26a1b" />
        <path d="M5 11l5 0-2 3zM13 10l5-1-3 4z" fill="#3a2018" />
        <path d="M10 19q3 2 5-1" fill="none" stroke="#a33b20" strokeWidth="1.5" />
        <path d="M24 7l1 3 3 1-3 1.500-1 3.500-1-3.500-3-1.500 3-1z" fill="#ffd92e" />
      </svg>
    </ImeButton>
  </ImeBar>
);

export default function App() {
  return (
    <Shell>
      <GlobalStyle />
      <Header />
      <ViewRibbon />
      <Body>
        <NavPane />
        <DocumentPage />
        <PageRail />
      </Body>
      <Status />
      <InputMethodBar />
    </Shell>
  );
}
